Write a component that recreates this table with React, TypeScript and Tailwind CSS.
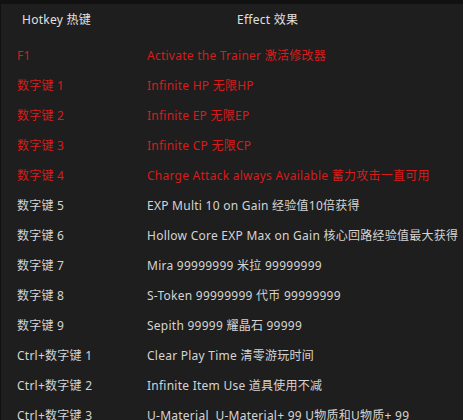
import React from "react";

const rows: { k: string; e: string; red?: boolean }[] = [
  { k: "F1", e: "Activate the Trainer 激活修改器", red: true },
  { k: "数字键 1", e: "Infinite HP 无限HP", red: true },
  { k: "数字键 2", e: "Infinite EP 无限EP", red: true },
  { k: "数字键 3", e: "Infinite CP 无限CP", red: true },
  { k: "数字键 4", e: "Charge Attack always Available 蓄力攻击一直可用", red: true },
  { k: "数字键 5", e: "EXP Multi 10 on Gain 经验值10倍获得" },
  { k: "数字键 6", e: "Hollow Core EXP Max on Gain 核心回路经验值最大获得" },
  { k: "数字键 7", e: "Mira 99999999 米拉 99999999" },
  { k: "数字键 8", e: "S-Token 99999999 代币 99999999" },
  { k: "数字键 9", e: "Sepith 99999 耀晶石 99999" },
  { k: "Ctrl+数字键 1", e: "Clear Play Time 清零游玩时间" },
  { k: "Ctrl+数字键 2", e: "Infinite Item Use 道具使用不减" },
  { k: "Ctrl+数字键 3", e: "U-Material  U-Material+ 99 U物质和U物质+ 99" },
];

export default function App() {
  return (
    <div
      className="w-[463px] h-[420px] overflow-hidden bg-[#111111] text-[12px] tracking-[0.25px]"
      style={{ fontFamily: '"Noto Sans", "Noto Sans CJK SC", sans-serif' }}
    >
      <div className="h-[4px]" />
      <div className="ml-[1px] h-[416px] bg-[#1e1e1e] whitespace-pre">
        <div className="flex h-[30px] items-center pt-[1px] text-[#e0e0e0]">
          <div className="w-[236px] pl-[21px]">Hotkey 热键</div>
          <div>Effect 效果</div>
        </div>
        <div className="pt-[7px]">
          {rows.map((r, i) => (
            <div
              key={i}
              className={`flex h-[30px] items-center ${r.red ? "text-[#d81c1c]" : "text-[#d4d4d4]"}`}
            >
              <div className="w-[146px] pl-[16px]">{r.k}</div>
              <div>{r.e}</div>
            </div>
          ))}
        </div>
      </div>
    </div>
  );
}
